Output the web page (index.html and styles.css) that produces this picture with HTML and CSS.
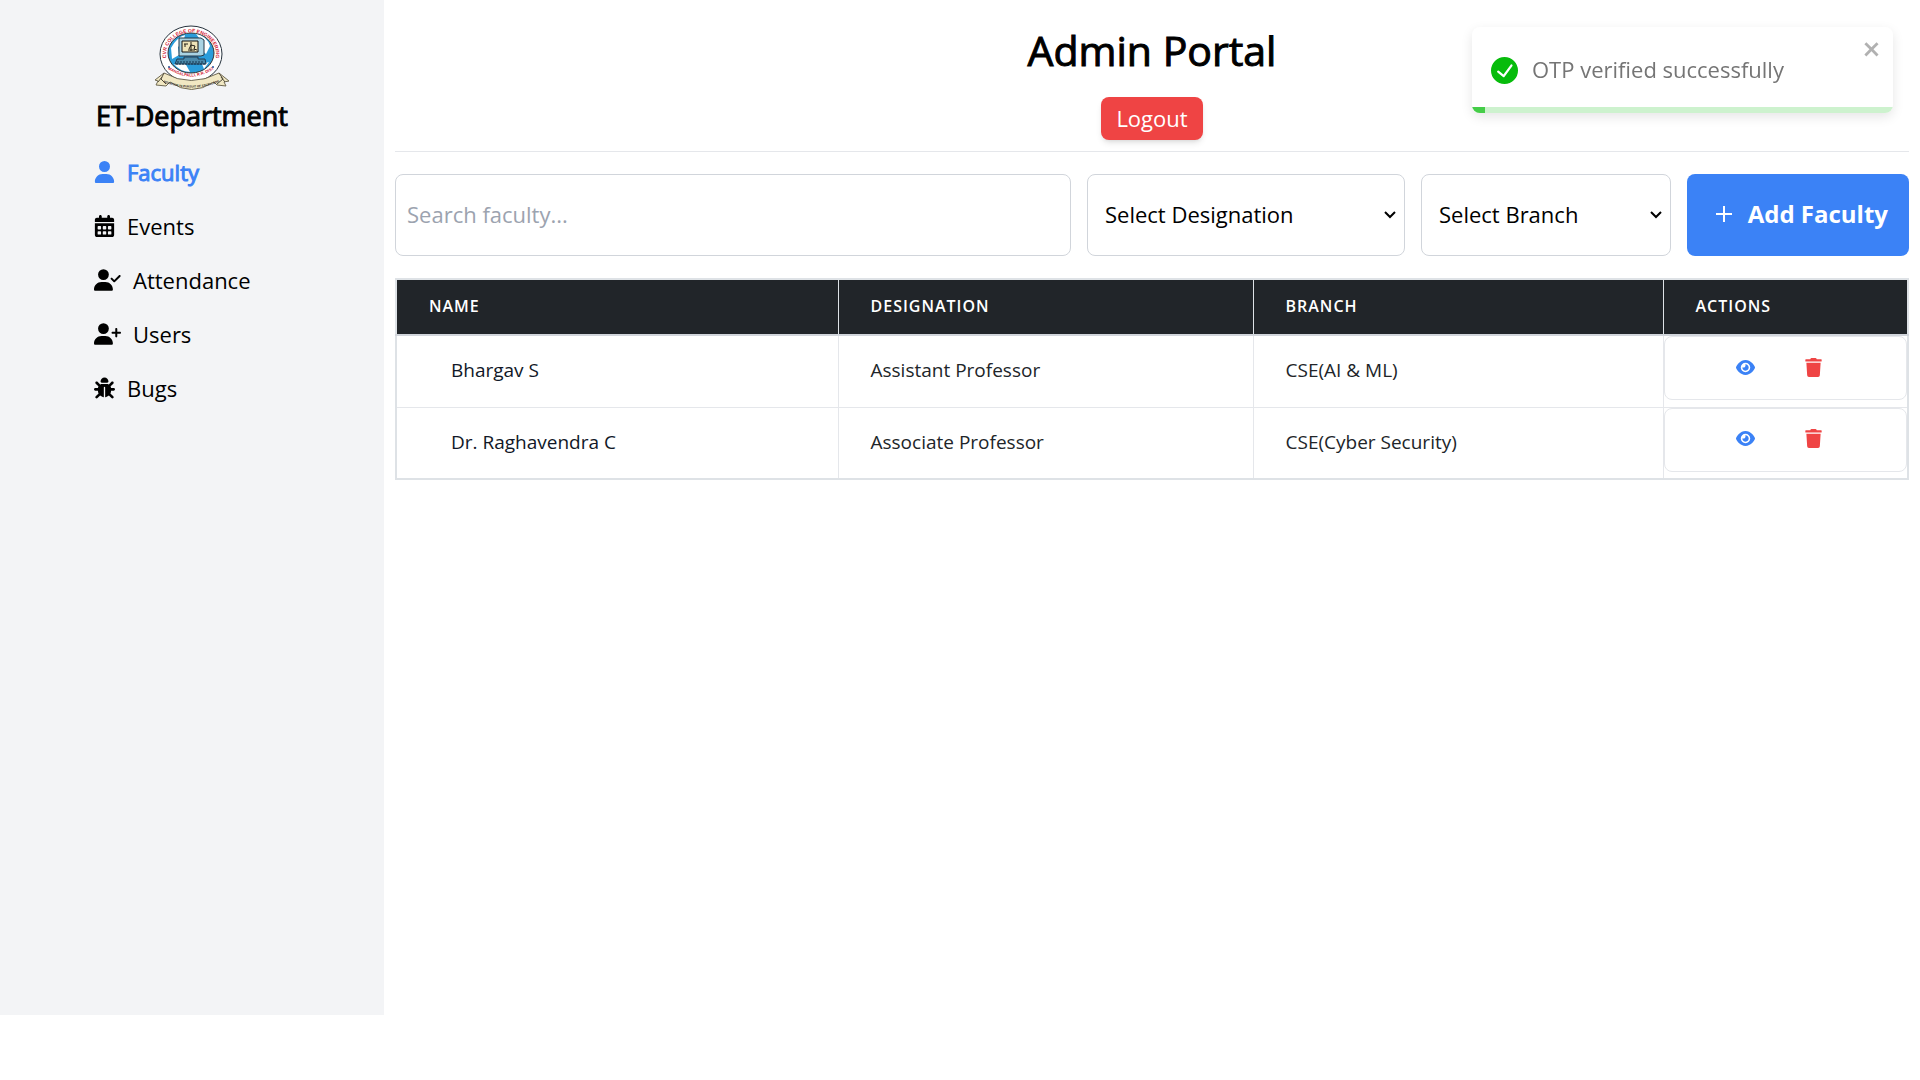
FILE: index.html
```html
<!DOCTYPE html>
<html lang="en">
<head>
<meta charset="utf-8">
<meta name="viewport" content="width=device-width, initial-scale=1">
<title>Admin Portal</title>
<link rel="stylesheet" href="styles.css">
</head>
<body>
<svg class="sprite" aria-hidden="true">
  <symbol id="eye" viewBox="0 0 576 512"><path d="M288 32c-80.800 0-145.500 36.800-192.600 80.600C48.600 156 17.300 208 2.500 243.700c-3.300 7.900-3.300 16.700 0 24.600C17.300 304 48.600 356 95.400 399.400C142.500 443.200 207.200 480 288 480s145.500-36.800 192.600-80.600c46.800-43.500 78.100-95.400 93-131.100c3.300-7.900 3.300-16.700 0-24.600c-14.900-35.700-46.200-87.700-93-131.100C433.500 68.800 368.800 32 288 32zM144 256a144 144 0 1 1 288 0 144 144 0 1 1-288 0zm144-64c0 35.300-28.700 64-64 64c-7.100 0-13.900-1.200-20.300-3.300c-5.500-1.800-11.900 1.600-11.700 7.400c.3 6.900 1.300 13.800 3.200 20.700c13.700 51.200 66.400 81.600 117.600 67.900s81.600-66.400 67.900-117.600c-11.100-41.500-47.800-69.400-88.600-71.100c-5.800-.2-9.200 6.100-7.400 11.700c2.100 6.400 3.300 13.200 3.300 20.300z"/></symbol>
  <symbol id="trash" viewBox="0 0 448 512"><path d="M432 32H312l-9.400-18.700A24 24 0 0 0 281.100 0H166.800a23.720 23.720 0 0 0-21.400 13.300L136 32H16A16 16 0 0 0 0 48v32a16 16 0 0 0 16 16h416a16 16 0 0 0 16-16V48a16 16 0 0 0-16-16zM53.200 467a48 48 0 0 0 47.900 45h245.800a48 48 0 0 0 47.900-45L416 128H32z"/></symbol>
</svg>
<div class="layout">
  <aside class="sidebar">
    <svg class="logo" viewBox="0 0 76 64" role="img" aria-label="CVR College of Engineering">
      <defs>
        <path id="arc-top" d="M14 37A25 22 0 1 1 60 37"/>
        <path id="arc-low" d="M14 43Q37 58 60 43"/>
        <path id="arc-band" d="M9 56Q37 67 65 56"/>
      </defs>
      <ellipse cx="37" cy="28" rx="31" ry="28" fill="#fff" stroke="#26323d"/>
      <ellipse cx="37" cy="27" rx="23" ry="20" fill="#2a9cda" stroke="#333"/>
      <path d="M17 22q6-11 14-13l-2 8-5 4 1 8-7 4zM42 8q11 2 14 12l-4 8-5-4 2-7zM20 38l11-1 5 9q-11-1-16-8zM48 38l7-2-5 7z" fill="#fff"/>
      <path d="M25 12h22l3 2v15l-3 1H25z" fill="#a9d3e3" stroke="#243949"/>
      <path d="M28 15h16v11H28z" fill="#eee4b8" stroke="#111"/>
      <path d="M30 18h4M31 18v3M35 23l2-4 4 1-1 3 3 1M37 16v9M34 24h7" fill="none" stroke="#252017"/>
      <path d="M30 31h14v2h7l1 5H21l2-5h7z" fill="#4b8aab" stroke="#213d55"/>
      <path d="M23 36h27M22 38h29" stroke="#16354e" stroke-dasharray="2 1"/>
      <text class="logo-name"><textPath href="#arc-top" startOffset="50%">CVR COLLEGE OF ENGINEERING</textPath></text>
      <text class="logo-place"><textPath href="#arc-low" startOffset="50%">MANGALPALLI, R.R. DIST</textPath></text>
      <circle cx="15" cy="41" r="1" fill="#26549a"/><circle cx="59" cy="41" r="1" fill="#26549a"/>
      <path d="M10 47Q37 62 65 47l10 8-5 1 2 4-9-1-3-3Q37 71 16 56l-4 4-10-1 2-4-3-1z" fill="#f1e8c3" stroke="#706a54"/>
      <path d="M10 47l-3 6 5 5M65 47l4 6-6 5M4 56l4-5M71 56l-4-5" fill="none" stroke="#504b3c"/>
      <text class="logo-motto"><textPath href="#arc-band" startOffset="50%">INNOVATION IN PURSUIT OF EXCELLENCE</textPath></text>
    </svg>
    <h2 class="brand">ET-Department</h2>
    <nav class="menu">
      <a href="#faculty" class="active"><svg class="icon narrow" viewBox="0 0 448 512"><path d="M224 256A128 128 0 1 0 224 0a128 128 0 1 0 0 256zm-45.700 48C79.800 304 0 383.800 0 482.300C0 498.700 13.300 512 29.700 512H418.300c16.400 0 29.700-13.300 29.700-29.700C448 383.800 368.200 304 269.700 304H178.300z"/></svg>Faculty</a>
      <a href="#events"><svg class="icon narrow" viewBox="0 0 448 512"><path d="M96 32V64H48C21.500 64 0 85.500 0 112v48H448V112c0-26.500-21.500-48-48-48H352V32c0-17.700-14.300-32-32-32s-32 14.300-32 32V64H160V32c0-17.700-14.300-32-32-32S96 14.300 96 32zM448 192H0V464c0 26.500 21.500 48 48 48H400c26.500 0 48-21.500 48-48V192zM64 272c0-8.800 7.200-16 16-16h48c8.800 0 16 7.200 16 16v48c0 8.800-7.200 16-16 16H80c-8.800 0-16-7.200-16-16V272zm120 0c0-8.800 7.200-16 16-16h48c8.800 0 16 7.200 16 16v48c0 8.800-7.200 16-16 16H200c-8.800 0-16-7.200-16-16V272zm120 0c0-8.800 7.200-16 16-16h48c8.800 0 16 7.200 16 16v48c0 8.800-7.200 16-16 16H320c-8.800 0-16-7.200-16-16V272zM64 392c0-8.800 7.200-16 16-16h48c8.800 0 16 7.200 16 16v48c0 8.800-7.200 16-16 16H80c-8.800 0-16-7.200-16-16V392zm120 0c0-8.800 7.200-16 16-16h48c8.800 0 16 7.200 16 16v48c0 8.800-7.200 16-16 16H200c-8.800 0-16-7.200-16-16V392zm120 0c0-8.800 7.200-16 16-16h48c8.800 0 16 7.200 16 16v48c0 8.800-7.200 16-16 16H320c-8.800 0-16-7.200-16-16V392z" fill-rule="evenodd"/></svg>Events</a>
      <a href="#attendance"><svg class="icon wide" viewBox="0 0 640 512"><path d="M96 128a128 128 0 1 1 256 0A128 128 0 1 1 96 128zM0 482.300C0 383.800 79.800 304 178.300 304h91.400C368.200 304 448 383.800 448 482.300c0 16.400-13.300 29.700-29.700 29.700H29.700C13.300 512 0 498.700 0 482.300zM625 177L497 305c-9.400 9.400-24.600 9.400-33.900 0l-64-64c-9.400-9.400-9.400-24.600 0-33.900s24.600-9.400 33.900 0l47 47L591 143c9.400-9.400 24.600-9.400 33.900 0s9.400 24.600 0 33.900z"/></svg>Attendance</a>
      <a href="#users"><svg class="icon wide" viewBox="0 0 640 512"><path d="M96 128a128 128 0 1 1 256 0A128 128 0 1 1 96 128zM0 482.300C0 383.800 79.800 304 178.300 304h91.400C368.200 304 448 383.800 448 482.300c0 16.400-13.300 29.700-29.700 29.700H29.700C13.300 512 0 498.700 0 482.300zM504 312V248H440c-13.300 0-24-10.700-24-24s10.700-24 24-24h64V136c0-13.300 10.700-24 24-24s24 10.700 24 24v64h64c13.300 0 24 10.700 24 24s-10.700 24-24 24H552v64c0 13.300-10.700 24-24 24s-24-10.700-24-24z"/></svg>Users</a>
      <a href="#bugs"><svg class="icon square" viewBox="0 0 512 512"><path d="M256 0c53 0 96 43 96 96v3.600c0 15.700-12.700 28.400-28.400 28.400H188.400c-15.700 0-28.400-12.700-28.400-28.400V96c0-53 43-96 96-96zM41.400 105.400c12.500-12.500 32.800-12.500 45.300 0l64 64c.7 .7 1.300 1.400 1.900 2.100c14.200-7.300 30.400-11.400 47.500-11.400H312c17.100 0 33.200 4.100 47.500 11.400c.6-.7 1.200-1.400 1.900-2.100l64-64c12.500-12.500 32.800-12.500 45.300 0s12.500 32.800 0 45.300l-64 64c-.7 .7-1.400 1.300-2.100 1.900c6.200 12 10.100 25.300 11.100 39.500H480c17.700 0 32 14.300 32 32s-14.300 32-32 32H416c0 24.600-5.500 47.800-15.400 68.600c2.200 1.300 4.200 2.900 6 4.800l64 64c12.500 12.500 12.500 32.800 0 45.300s-32.800 12.500-45.300 0l-63.100-63.100c-24.500 21.800-55.800 36.200-90.300 39.600V240c0-8.800-7.200-16-16-16s-16 7.200-16 16V479.200c-34.500-3.400-65.800-17.800-90.300-39.600L86.600 502.600c-12.500 12.500-32.800 12.500-45.300 0s-12.500-32.800 0-45.300l64-64c1.900-1.900 3.900-3.400 6-4.800C101.500 367.800 96 344.600 96 320H32c-17.700 0-32-14.300-32-32s14.300-32 32-32H96.300c1.100-14.100 5-27.500 11.100-39.500c-.7-.6-1.400-1.200-2.100-1.900l-64-64c-12.500-12.500-12.500-32.800 0-45.300z"/></svg>Bugs</a>
    </nav>
  </aside>
  <main class="content">
    <header class="top">
      <h1>Admin Portal</h1>
      <button type="button" class="logout">Logout</button>
    </header>
    <form class="filters">
      <input type="search" class="search" placeholder="Search faculty..." aria-label="Search faculty">
      <select class="designation" aria-label="Designation"><option>Select Designation</option></select>
      <select class="branch" aria-label="Branch"><option>Select Branch</option></select>
      <button type="button" class="add"><svg class="plus" viewBox="0 0 16 16"><path d="M8 0v16M0 8h16"/></svg>Add Faculty</button>
    </form>
    <table class="faculty">
      <colgroup><col class="c-name"><col class="c-designation"><col class="c-branch"><col class="c-actions"></colgroup>
      <thead><tr><th><span>Name</span></th><th><span>Designation</span></th><th><span>Branch</span></th><th><span>Actions</span></th></tr></thead>
      <tbody>
        <tr><td class="name">Bhargav S</td><td>Assistant Professor</td><td>CSE(AI &amp; ML)</td><td class="actions"><div class="tools"><button type="button" class="view" aria-label="View"><svg viewBox="0 0 576 512"><use href="#eye"/></svg></button><button type="button" class="delete" aria-label="Delete"><svg viewBox="0 0 448 512"><use href="#trash"/></svg></button></div></td></tr>
        <tr><td class="name">Dr. Raghavendra C</td><td>Associate Professor</td><td>CSE(Cyber Security)</td><td class="actions"><div class="tools"><button type="button" class="view" aria-label="View"><svg viewBox="0 0 576 512"><use href="#eye"/></svg></button><button type="button" class="delete" aria-label="Delete"><svg viewBox="0 0 448 512"><use href="#trash"/></svg></button></div></td></tr>
      </tbody>
    </table>
  </main>
</div>
<div class="toast" role="alert">
  <svg class="ok" viewBox="0 0 24 24"><path d="M12 0a12 12 0 1 0 12 12A12.014 12.014 0 0 0 12 0zm6.927 8.200l-6.845 9.289a1.011 1.011 0 0 1-1.430.188l-4.888-3.908a1 1 0 1 1 1.250-1.562l4.076 3.261 6.227-8.451a1 1 0 1 1 1.610 1.183z"/></svg>
  <span>OTP verified successfully</span>
  <button type="button" class="close" aria-label="Close"><svg viewBox="0 0 14 16"><path fill-rule="evenodd" d="M7.710 8.230l3.750 3.750-1.480 1.480-3.750-3.750-3.750 3.750L1 11.980l3.750-3.750L1 4.480 2.480 3l3.750 3.750L9.980 3l1.480 1.480-3.750 3.750z"/></svg></button>
  <div class="progress"><div class="bar"></div></div>
</div>
</body>
</html>
```
FILE: styles.css
```css
*, *::before, *::after { box-sizing: border-box; }
body { margin: 0; font: 22px/32px "Open Sans", "Noto Sans", sans-serif; color: #000; background: #fff; }
h1, h2 { margin: 0; font-weight: 400; -webkit-text-stroke: 1px currentColor; }
button, input, select { font: inherit; color: inherit; }
button { border: 0; cursor: pointer; }
svg { display: block; fill: currentColor; }
.sprite { position: absolute; width: 0; height: 0; }

.layout { display: flex; align-items: stretch; min-height: 94vh; }
.sidebar { flex: 0 0 20%; padding: 26px 16px; background: #f3f4f6; display: flex; flex-direction: column; align-items: center; }
.logo { width: 76px; height: 64px; overflow: visible; }
.logo text { text-anchor: middle; font-family: "Liberation Sans", sans-serif; font-weight: 700; }
.logo .logo-name { font-size: 5px; fill: #d22034; }
.logo .logo-place { font-size: 4px; fill: #d22034; }
.logo .logo-motto { font-size: 3px; fill: #222; }
.brand { margin-top: 8px; font-size: 27px; line-height: 36px; }
.menu { width: 196px; margin-top: 16px; display: flex; flex-direction: column; gap: 10px; }
.menu a { display: flex; align-items: center; gap: 12px; height: 44px; color: #000; text-decoration: none; }
.menu a.active { color: #3b82f6; -webkit-text-stroke: 1px currentColor; }
.icon { height: 22px; stroke: none; }
.narrow, .square { width: 21px; }
.wide { width: 27px; }

.content { flex: 1; min-width: 0; padding: 22px 11px; }
.top { display: flex; flex-direction: column; align-items: center; gap: 19px; padding-bottom: 11px; border-bottom: 1px solid #e5e7eb; }
.top h1 { font-size: 41px; line-height: 56px; }
.logout { height: 43px; padding: 0 15px 2px; border-radius: 8px; background: #ef4444; color: #fff; box-shadow: 0 4px 6px -1px #0000001a, 0 2px 4px -2px #0000001a; }
.filters { display: flex; gap: 16px; height: 82px; margin: 22px 0; }
.search, .filters select { border: 1px solid #d1d5db; border-radius: 8px; background: #fff; }
.search { flex: 1; min-width: 0; padding: 0 11px 2px; }
.search::placeholder { color: #9ca3af; }
.filters select { appearance: none; padding: 0 32px 2px 17px; background: #fff url("data:image/svg+xml,%3Csvg xmlns='http://www.w3.org/2000/svg' viewBox='0 0 12 8'%3E%3Cpath d='M1 1l5 5 5-5' fill='none' stroke='%23000' stroke-width='2'/%3E%3C/svg%3E") no-repeat right 8px center / 12px 8px; }
.designation { width: 318px; }
.branch { width: 250px; }
.add { width: 222px; padding: 0 21px 2px; display: flex; align-items: center; justify-content: flex-end; gap: 16px; border-radius: 8px; background: #3b82f6; color: #fff; font-size: 24px; font-weight: 700; }
.plus { width: 16px; height: 16px; stroke: #fff; stroke-width: 2; }

.faculty { width: 100%; table-layout: fixed; border-collapse: collapse; border: 2px solid #dee2e6; font-size: 19px; line-height: 28px; color: #212529; }
.c-name { width: 442px; }
.c-designation { width: 415px; }
.c-branch { width: 410px; }
.faculty th { height: 56px; padding: 0 32px 2px; background: #212529; color: #fff; font-size: 16px; font-weight: 600; letter-spacing: 1px; text-align: left; text-transform: uppercase; border: 1px solid #dee2e6; }
.faculty thead { border-bottom: 2px solid #d1d5db; }
.faculty td { height: 72px; padding: 0 32px 2px; border: 1px solid #e5e7eb; }
.faculty .name { padding-left: 54px; color: #111827; }
.faculty .actions { padding: 0; vertical-align: top; }
.tools { height: 64px; padding-right: 12px; display: flex; align-items: center; justify-content: center; gap: 50px; border: 1px solid #e5e7eb; border-radius: 8px; }
.tools button { padding: 0 0 2px; background: none; }
.tools svg { height: 19px; }
.view { color: #3b82f6; }
.view svg { width: 19px; }
.delete { color: #ef4444; }
.delete svg { width: 17px; }

.toast { position: fixed; top: 27px; right: 27px; width: 421px; height: 86px; padding: 0 19px; display: flex; align-items: center; gap: 14px; overflow: hidden; border-radius: 8px; background: #fff; color: #757575; box-shadow: 0 4px 12px #0000001a; }
.toast span { padding-bottom: 2px; }
.ok { width: 27px; height: 27px; color: #07bc0c; }
.close { position: absolute; top: 11px; right: 11px; padding: 0; background: none; color: #000; opacity: 0.3; }
.close svg { width: 19px; height: 22px; }
.progress { position: absolute; left: 0; right: 0; bottom: 0; height: 6px; background: #cdf2ce; }
.bar { width: 13px; height: 6px; background: #45cd48; }
```
